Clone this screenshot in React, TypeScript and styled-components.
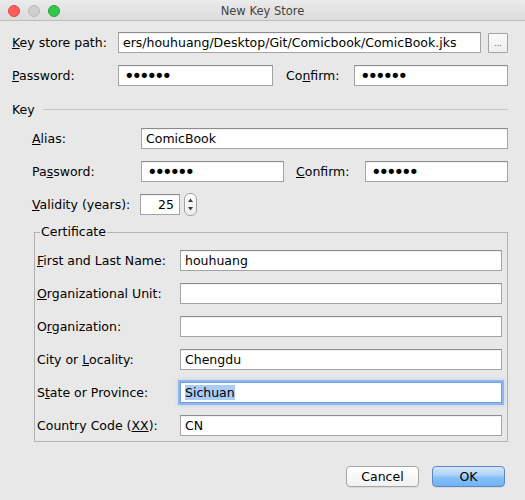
import React from "react";
import styled, { createGlobalStyle } from "styled-components";

const Global = createGlobalStyle`
  html, body { margin: 0; padding: 0; background: #e8e8e8; }
  body {
    font-family: "DejaVu Sans", "Liberation Sans", sans-serif;
    font-size: 12.5px;
    color: #000;
  }
`;

const Window = styled.div`
  width: 525px;
  height: 500px;
  background: #e8e8e8;
  display: flex;
  flex-direction: column;
  overflow: hidden;
`;

const TitleBar = styled.div`
  height: 20px;
  border-bottom: 1px solid #bdbdbd;
  background: linear-gradient(#ebebeb, #dcdcdc);
  display: grid;
  grid-template-columns: 1fr auto 1fr;
  align-items: center;
`;

const Lights = styled.div`
  display: flex;
  gap: 8px;
  padding-left: 8px;
  padding-top: 2px;
`;

const Light = styled.span<{ $fill: string; $edge: string }>`
  width: 12px;
  height: 12px;
  box-sizing: border-box;
  border-radius: 50%;
  background: ${(p) => p.$fill};
  border: 1px solid ${(p) => p.$edge};
`;

const Title = styled.div`
  font-size: 11.5px;
  color: #444;
  padding-top: 1px;
`;

const Content = styled.div`
  display: flex;
  flex-direction: column;
  padding: 11px 17px 0 12px;
`;

const Row = styled.div<{ $mt?: number }>`
  display: flex;
  align-items: center;
  margin-top: ${(p) => p.$mt ?? 0}px;
`;

const Label = styled.span<{ $w: number; $ml?: number }>`
  width: ${(p) => p.$w}px;
  margin-left: ${(p) => p.$ml ?? 0}px;
  flex: none;
  white-space: nowrap;
`;

const Mn = styled.span`
  text-decoration: underline;
  text-underline-offset: 1px;
`;

const Field = styled.div<{ $w?: number; $right?: boolean; $focus?: boolean }>`
  box-sizing: border-box;
  height: 21px;
  ${(p) => (p.$w ? `width: ${p.$w}px; flex: none;` : `flex: 1; min-width: 0;`)}
  background: #fff;
  border: 1px solid ${(p) => (p.$focus ? "#6f9fe0" : "#a4a4a4")};
  border-top-color: ${(p) => (p.$focus ? "#6f9fe0" : "#8c8c8c")};
  box-shadow: ${(p) =>
    p.$focus
      ? "0 0 0 2px rgba(122, 170, 238, 0.75), 0 0 3px 3px rgba(150, 190, 245, 0.35)"
      : "inset 0 1px 0 rgba(0,0,0,0.05)"};
  padding: 0 ${(p) => (p.$right ? 5 : 4)}px 0 4px;
  display: flex;
  align-items: center;
  justify-content: ${(p) => (p.$right ? "flex-end" : "flex-start")};
  overflow: hidden;
  white-space: nowrap;
`;

const Dots = styled.span`
  font-size: 18px;
  letter-spacing: -3.1px;
  line-height: 1;
  padding-left: 1px;
`;

const Selected = styled.span`
  background: #a9cbf8;
`;

const BrowseButton = styled.button`
  box-sizing: border-box;
  width: 20px;
  height: 20px;
  margin-left: 7px;
  flex: none;
  padding: 0;
  border: 1px solid #a2a2a2;
  border-radius: 1px;
  background: linear-gradient(#fbfbfb, #eeeeee);
  font-family: "DejaVu Sans", sans-serif;
  font-size: 8px;
  color: #555;
  line-height: 1;
  padding-top: 3px;
`;

const SectionHeader = styled.div`
  display: flex;
  align-items: center;
  height: 16px;
  margin-top: 15px;
`;

const Rule = styled.div`
  flex: 1;
  height: 1px;
  background: #c6c6c6;
  margin-left: 8px;
`;

const KeySection = styled.div`
  display: flex;
  flex-direction: column;
  padding-left: 20px;
`;

const Stepper = styled.svg`
  flex: none;
  margin-left: 4px;
`;

const Certificate = styled.fieldset`
  margin: 8px 0 0 22px;
  padding: 10px 5px 5px 2px;
  border: 1px solid #b2b2b2;
  min-width: 0;
  display: flex;
  flex-direction: column;
  gap: 12px;
`;

const Legend = styled.legend`
  padding: 0 1px;
  margin-left: 3px;
  line-height: 16px;
  font-size: 12.5px;
`;

const Buttons = styled.div`
  display: flex;
  justify-content: flex-end;
  gap: 13px;
  margin-top: 24px;
  padding-right: 3px;
`;

const PushButton = styled.button<{ $primary?: boolean }>`
  box-sizing: border-box;
  width: 73px;
  height: 21px;
  padding: 0;
  border-radius: 4px;
  font-family: "DejaVu Sans", sans-serif;
  font-size: 12.5px;
  color: #000;
  border: 1px solid ${(p) => (p.$primary ? "#5b88c8" : "#a5a5a5")};
  background: ${(p) =>
    p.$primary
      ? "linear-gradient(#d6e8fd 0%, #a9d0f9 45%, #88c0f7 55%, #6fb2f4 100%)"
      : "linear-gradient(#ffffff, #f1f1f1)"};
  box-shadow: 0 1px 0 rgba(0, 0, 0, 0.06);
`;

const certRows: { label: React.ReactNode; value?: React.ReactNode; focus?: boolean }[] = [
  { label: <><Mn>F</Mn>irst and Last Name:</>, value: "houhuang" },
  { label: <><Mn>O</Mn>rganizational Unit:</> },
  { label: <>O<Mn>r</Mn>ganization:</> },
  { label: <>City or <Mn>L</Mn>ocality:</>, value: "Chengdu" },
  { label: <>S<Mn>t</Mn>ate or Province:</>, value: <Selected>Sichuan</Selected>, focus: true },
  { label: <>Country Code (<Mn>XX</Mn>):</>, value: "CN" },
];

export default function App() {
  return (
    <Window>
      <Global />
      <TitleBar>
        <Lights>
          <Light $fill="#fc605b" $edge="#de4643" />
          <Light $fill="#cfcfcf" $edge="#b9b9b9" />
          <Light $fill="#34c84a" $edge="#25a336" />
        </Lights>
        <Title>New Key Store</Title>
        <div />
      </TitleBar>
      <Content>
        <Row>
          <Label $w={106}><Mn>K</Mn>ey store path:</Label>
          <Field>ers/houhuang/Desktop/Git/Comicbook/ComicBook.jks</Field>
          <BrowseButton>...</BrowseButton>
        </Row>
        <Row $mt={12}>
          <Label $w={106}><Mn>P</Mn>assword:</Label>
          <Field $w={155}><Dots>••••••</Dots></Field>
          <Label $w={68} $ml={13}>Co<Mn>n</Mn>firm:</Label>
          <Field><Dots>••••••</Dots></Field>
        </Row>
        <SectionHeader>
          <span>Key</span>
          <Rule />
        </SectionHeader>
        <KeySection>
          <Row $mt={11}>
            <Label $w={109}><Mn>A</Mn>lias:</Label>
            <Field>ComicBook</Field>
          </Row>
          <Row $mt={12}>
            <Label $w={109}>Pa<Mn>s</Mn>sword:</Label>
            <Field $w={143}><Dots>••••••</Dots></Field>
            <Label $w={69} $ml={12}><Mn>C</Mn>onfirm:</Label>
            <Field><Dots>••••••</Dots></Field>
          </Row>
          <Row $mt={11}>
            <Label $w={108}><Mn>V</Mn>alidity (years):</Label>
            <Field $w={40} $right>25</Field>
            <Stepper width="13" height="23" viewBox="0 0 13 23">
              <defs>
                <linearGradient id="stepbg" x1="0" y1="0" x2="0" y2="1">
                  <stop offset="0" stopColor="#ffffff" />
                  <stop offset="1" stopColor="#ececec" />
                </linearGradient>
              </defs>
              <rect x="0.5" y="0.5" width="12" height="22" rx="5.5" fill="url(#stepbg)" stroke="#a3a3a3" />
              <path d="M4 9 L6.5 5.5 L9 9 Z" fill="#3c3c3c" />
              <path d="M4 14 L6.5 17.5 L9 14 Z" fill="#3c3c3c" />
            </Stepper>
          </Row>
        </KeySection>
        <Certificate>
          <Legend>Certificate</Legend>
          {certRows.map((r, i) => (
            <Row key={i}>
              <Label $w={143}>{r.label}</Label>
              <Field $focus={r.focus}>{r.value}</Field>
            </Row>
          ))}
        </Certificate>
        <Buttons>
          <PushButton>Cancel</PushButton>
          <PushButton $primary>OK</PushButton>
        </Buttons>
      </Content>
    </Window>
  );
}
